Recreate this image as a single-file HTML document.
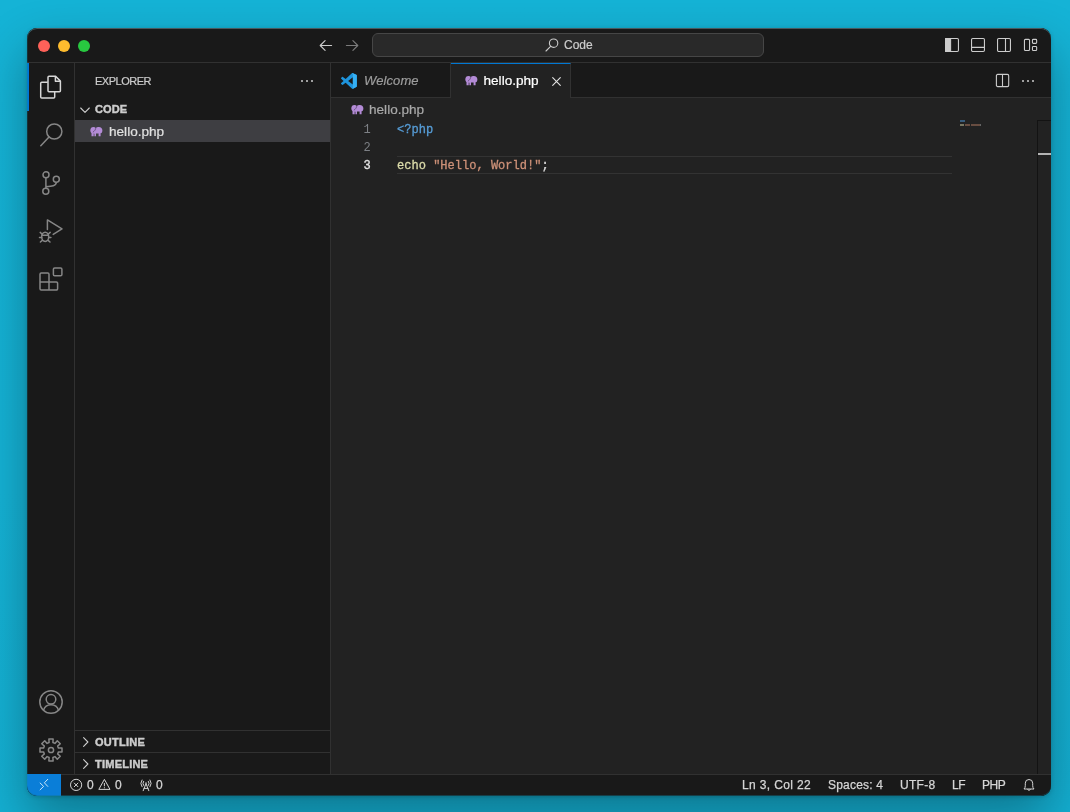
<!DOCTYPE html>
<html>
<head>
<meta charset="utf-8">
<title>Code</title>
<style>
*{box-sizing:border-box;margin:0;padding:0}
html,body{width:1070px;height:812px;overflow:hidden}
body{font-family:"Liberation Sans",sans-serif;background:#15b2d5;position:relative;color:#ccc}
.bg{position:absolute;left:0;top:0;width:1070px;height:812px;background:linear-gradient(180deg,#15b3d6 0%,#15b2d5 60%,#14afd2 100%)}
.shadow{position:absolute;left:27px;top:28px;width:1024px;height:768px;border-radius:10px;box-shadow:0 22px 50px rgba(0,0,0,.32),0 1px 4px rgba(0,0,0,.18)}
.win{will-change:transform;position:absolute;left:27px;top:28px;width:1024px;height:768px;border-radius:10px;overflow:hidden;background:#191919}
.abs{position:absolute}
.t{position:absolute;white-space:nowrap;line-height:1;-webkit-text-stroke:.2px currentColor}
svg{position:absolute;overflow:visible}
/* title bar */
.title{left:0;top:0;width:1024px;height:35px;border-bottom:1px solid #313131;background:#191919}
.tl{position:absolute;width:12px;height:12px;border-radius:50%;top:12px}
.cc{left:345px;top:5px;width:392px;height:24px;border-radius:6px;background:#292929;border:1px solid #464646}
/* activity bar */
.act{left:0;top:35px;width:48px;height:711px;border-right:1px solid #313131;background:#191919}
/* sidebar */
.side{left:48px;top:35px;width:256px;height:711px;border-right:1px solid #313131;background:#191919}
/* editor */
.tabs{left:304px;top:35px;width:720px;height:35px;background:#191919;border-bottom:1px solid #313131}
.tab{position:absolute;top:0;height:35px;width:120px;border-right:1px solid #313131}
.tab.on{background:#222222;border-top:1px solid #0078d4}
.ed{left:304px;top:70px;width:720px;height:676px;background:#222222}
.mono{font-family:"Liberation Mono",monospace;font-size:12.040px;-webkit-text-stroke:.3px currentColor}
/* status */
.status{left:0;top:746px;width:1024px;height:22px;border-top:1px solid #313131;background:#191919}
.st{position:absolute;white-space:nowrap;font-size:12px;line-height:12px;top:751px;color:#d6d6d6;-webkit-text-stroke:.25px currentColor}
</style>
</head>
<body>
<div class="bg"></div>
<div class="shadow"></div>
<div class="win">

<!-- TITLE BAR -->
<div class="abs title">
  <div class="tl" style="left:11px;background:#fe6159"></div>
  <div class="tl" style="left:31px;background:#febc2e"></div>
  <div class="tl" style="left:51px;background:#28c840"></div>
  <!-- back / forward -->
  <svg style="left:292px;top:11px" width="14" height="14" viewBox="0 0 14 14" fill="none" stroke="#ccc" stroke-width="1.1" stroke-linecap="round" stroke-linejoin="round"><path d="M12.600 6.500H1.200M6.100 1.600 1.200 6.500 6.100 11.400"/></svg>
  <svg style="left:318px;top:11px" width="14" height="14" viewBox="0 0 14 14" fill="none" stroke="#7c7c7c" stroke-width="1.1" stroke-linecap="round" stroke-linejoin="round"><path d="M1.400 6.500h11.400M7.900 1.600 12.800 6.500 7.900 11.400"/></svg>
  <div class="abs cc"></div>
  <svg style="left:518px;top:10px" width="14" height="14" viewBox="0 0 14 14" fill="none" stroke="#ccc" stroke-width="1.1" stroke-linecap="round"><circle cx="8.6" cy="5.2" r="4.2"/><path d="M5.6 8.3 1 13"/></svg>
  <div class="t" id="t_code" style="left:537px;top:11px;font-size:12px;color:#ccc">Code</div>
  <!-- layout icons -->
  <svg style="left:918px;top:10px" width="14" height="14" viewBox="0 0 14 14" fill="none" stroke="#ccc" stroke-width="1.1"><rect x=".55" y=".55" width="12.9" height="12.9" rx="1.2"/><path d="M.6.6h5v12.8h-5z" fill="#ccc"/></svg>
  <svg style="left:944px;top:10px" width="14" height="14" viewBox="0 0 14 14" fill="none" stroke="#ccc" stroke-width="1.1"><rect x=".55" y=".55" width="12.9" height="12.9" rx="1.2"/><path d="M.6 9.4h12.8"/></svg>
  <svg style="left:970px;top:10px" width="14" height="14" viewBox="0 0 14 14" fill="none" stroke="#ccc" stroke-width="1.1"><rect x=".55" y=".55" width="12.9" height="12.9" rx="1.2"/><path d="M8.500 .6v12.800"/></svg>
  <svg style="left:996px;top:10px" width="14" height="14" viewBox="0 0 14 14" fill="none" stroke="#ccc" stroke-width="1.1"><rect x="1.450" y="1.350" width="5.100" height="11.200" rx="1"/><rect x="9.450" y="1.350" width="4.200" height="4" rx=".9"/><rect x="9.450" y="8.450" width="4.200" height="4.100" rx=".9"/></svg>
</div>

<!-- ACTIVITY BAR -->
<div class="abs act">
  <div class="abs" style="left:0;top:0;width:2px;height:48px;background:#0078d4"></div>
  <!-- explorer -->
  <svg style="left:12px;top:12px" width="24" height="24" viewBox="0 0 24 24" fill="none" stroke="#d7d7d7" stroke-width="1.5" stroke-linejoin="round"><path d="M9 15.800V2.300a1 1 0 0 1 1-1h6.600l4.800 4.800v9.700a1 1 0 0 1-1 1h-10.400a1 1 0 0 1-1-1z"/><path d="M16.400 1.500v4.800h4.800"/><path d="M8.800 7.200H2.700a1 1 0 0 0-1 1v13.800a1 1 0 0 0 1 1h12a1 1 0 0 0 1-1V17"/></svg>
  <!-- search -->
  <svg style="left:12px;top:60px" width="24" height="24" viewBox="0 0 24 24" fill="none" stroke="#868686" stroke-width="1.5" stroke-linecap="round"><circle cx="15.300" cy="8.500" r="7.600"/><path d="M10 13.900 1.800 22.800"/></svg>
  <!-- scm -->
  <svg style="left:12px;top:108px" width="24" height="24" viewBox="0 0 24 24" fill="none" stroke="#868686" stroke-width="1.5"><circle cx="7" cy="3.800" r="3"/><circle cx="17.300" cy="8.200" r="3"/><circle cx="6.800" cy="20.300" r="3"/><path d="M6.900 6.800v10.500M17.300 11.200c0 3.800-4.600 4.100-10.400 4.500"/></svg>
  <!-- debug -->
  <svg style="left:12px;top:156px" width="24" height="24" viewBox="0 0 24 24" fill="none" stroke="#868686" stroke-width="1.5" stroke-linejoin="round" stroke-linecap="round"><path d="M8.400 10.600V0.900L23 9.900l-8.800 5.500"/><ellipse cx="6.200" cy="17.800" rx="3.500" ry="4.600"/><path d="M3 16.200h6.400M3 15 1.200 13.400M9.400 15l1.800-1.600M2.700 18.600H.5M9.700 18.600h2.200M3.300 21.400l-1.900 1.600M9.100 21.400l1.900 1.600"/></svg>
  <!-- extensions -->
  <svg style="left:12px;top:204px" width="24" height="24" viewBox="0 0 24 24" fill="none" stroke="#868686" stroke-width="1.5" stroke-linejoin="round"><path d="M2.200 6H8.800a1.200 1.200 0 0 1 1.200 1.200V15H17.400a1.200 1.200 0 0 1 1.200 1.200V21.800a1.200 1.200 0 0 1-1.200 1.200H2.200a1.200 1.200 0 0 1-1.200-1.200V7.200a1.200 1.200 0 0 1 1.200-1.200z"/><path d="M1 15H10V23"/><rect x="14.400" y="1" width="8.500" height="7.800" rx="1.300"/></svg>
  <!-- account -->
  <svg style="left:12px;top:627px" width="24" height="24" viewBox="0 0 24 24" fill="none" stroke="#868686" stroke-width="1.5"><circle cx="12" cy="12" r="11.200"/><circle cx="12" cy="9.300" r="4.800"/><path d="M4.500 20.300c1.100-3.900 4-5.600 7.500-5.600s6.400 1.700 7.500 5.600"/></svg>
  <!-- gear -->
  <svg style="left:12px;top:675px" width="24" height="24" viewBox="0 0 24 24" fill="none" stroke="#868686" stroke-width="1.5" stroke-linejoin="round"><circle cx="12" cy="12" r="2.6"/><path d="M10.09 4.54L9.88 1.00L14.12 1.00L13.91 4.54L15.93 5.38L18.28 2.73L21.27 5.72L18.62 8.07L19.46 10.09L23.00 9.88L23.00 14.12L19.46 13.91L18.62 15.93L21.27 18.28L18.28 21.27L15.93 18.62L13.91 19.46L14.12 23.00L9.88 23.00L10.09 19.46L8.07 18.62L5.72 21.27L2.73 18.28L5.38 15.93L4.54 13.91L1.00 14.12L1.00 9.88L4.54 10.09L5.38 8.07L2.73 5.72L5.72 2.73L8.07 5.38Z"/></svg>
</div>

<!-- SIDEBAR -->
<div class="abs side">
  <div class="t" id="t_explorer" style="letter-spacing:-0.49px;left:20px;top:13px;font-size:11px;color:#ccc">EXPLORER</div>
  <svg style="left:225px;top:16px" width="14" height="4" viewBox="0 0 14 4" fill="#ccc"><circle cx="2" cy="2" r="1"/><circle cx="7" cy="2" r="1"/><circle cx="12" cy="2" r="1"/></svg>
  <svg style="left:4.200px;top:40.500px" width="12" height="12" viewBox="0 0 12 12" fill="none" stroke="#ccc" stroke-width="1.1" stroke-linecap="round" stroke-linejoin="round"><path d="M1.700 4 6 8.300l4.300-4.300"/></svg>
  <div class="t" id="t_codeh" style="-webkit-text-stroke:.45px currentColor;letter-spacing:0.1px;left:20px;top:41px;font-size:11px;font-weight:bold;color:#ccc">CODE</div>
  <div class="abs" style="left:0;top:57px;width:255px;height:22px;background:#3e3e42"></div>
  <svg class="ele" style="left:15px;top:64px" width="12.4" height="9.2" viewBox="0 0 12.4 9.2"><use href="#ele"/></svg>
  <div class="t" id="t_hello1" style="left:34px;top:62px;font-size:13.6px;color:#e0e0e0">hello.php</div>

  <div class="abs" style="left:0;top:667px;width:255px;height:1px;background:#313131"></div>
  <svg style="left:5px;top:673px" width="12" height="12" viewBox="0 0 12 12" fill="none" stroke="#ccc" stroke-width="1.1" stroke-linecap="round" stroke-linejoin="round"><path d="M3.600 1.700 7.900 6l-4.300 4.300"/></svg>
  <div class="t" id="t_outline" style="-webkit-text-stroke:.45px currentColor;letter-spacing:0.25px;left:20px;top:674px;font-size:11px;font-weight:bold;color:#ccc">OUTLINE</div>
  <div class="abs" style="left:0;top:689px;width:255px;height:1px;background:#313131"></div>
  <svg style="left:5px;top:695px" width="12" height="12" viewBox="0 0 12 12" fill="none" stroke="#ccc" stroke-width="1.1" stroke-linecap="round" stroke-linejoin="round"><path d="M3.600 1.700 7.900 6l-4.300 4.300"/></svg>
  <div class="t" id="t_timeline" style="-webkit-text-stroke:.45px currentColor;letter-spacing:0.23px;left:20px;top:696px;font-size:11px;font-weight:bold;color:#ccc">TIMELINE</div>
</div>

<!-- TABS -->
<div class="abs tabs">
  <div class="tab" style="left:0">
    <svg style="left:10px;top:10px" width="15.800" height="15.800" viewBox="0 0 100 100"><use href="#vsc"/></svg>
    <div class="t" id="t_welcome" style="letter-spacing:0.1px;left:33px;top:11px;font-size:13px;font-style:italic;color:#9d9d9d">Welcome</div>
  </div>
  <div class="tab on" style="left:120px">
    <svg class="ele" style="left:14px;top:12px" width="12.4" height="9.2" viewBox="0 0 12.4 9.2"><use href="#ele"/></svg>
    <div class="t" id="t_hello2" style="left:32.500px;top:10px;font-size:13.6px;color:#fff">hello.php</div>
    <svg style="left:101px;top:12.500px" width="9" height="9" viewBox="0 0 9 9" fill="none" stroke="#e4e4e4" stroke-width="1.1" stroke-linecap="round"><path d="M.7.700l7.600 7.600M8.300.700.700 8.300"/></svg>
  </div>
  <!-- editor actions -->
  <svg style="left:665px;top:11px" width="14" height="14" viewBox="0 0 14 14" fill="none" stroke="#ccc" stroke-width="1.1"><rect x=".4" y=".4" width="12.300" height="12.200" rx="1.300"/><path d="M6.500 .4v12.200"/></svg>
  <svg style="left:690px;top:16px" width="14" height="4" viewBox="0 0 14 4" fill="#ccc"><circle cx="2" cy="2" r="1"/><circle cx="7" cy="2" r="1"/><circle cx="12" cy="2" r="1"/></svg>
</div>

<!-- EDITOR -->
<div class="abs ed">
  <!-- breadcrumb -->
  <svg class="ele" style="left:20px;top:7px" width="12.4" height="9.2" viewBox="0 0 12.4 9.2"><use href="#ele"/></svg>
  <div class="t" id="t_hello3" style="left:38px;top:5px;font-size:13.6px;color:#a9a9a9">hello.php</div>
  <!-- current line -->
  <div class="abs" style="left:66px;top:58px;width:555px;height:18px;border-top:1px solid #333;border-bottom:1px solid #333"></div>
  <!-- line numbers -->
  <div class="t mono" style="-webkit-text-stroke:0;left:32.500px;top:26px;color:#7d8085">1</div>
  <div class="t mono" style="-webkit-text-stroke:0;left:32.500px;top:44px;color:#7d8085">2</div>
  <div class="t mono" style="left:32.500px;top:62px;color:#e4e4e4">3</div>
  <!-- code -->
  <div class="t mono" style="left:66px;top:26px;color:#569cd6">&lt;?php</div>
  <div class="t mono" style="left:66px;top:62px;color:#d8d8d8"><span style="color:#dcdcaa">echo</span> <span style="color:#ce9178">"Hello, World!"</span>;</div>
  <!-- minimap -->
  <div class="abs" style="left:629px;top:22.400px;width:5px;height:1.500px;background:#3f6c93;opacity:.8"></div>
  <div class="abs" style="left:629px;top:26.300px;width:4px;height:1.500px;background:#8d8d74;opacity:.8"></div>
  <div class="abs" style="left:634px;top:26.300px;width:5px;height:1.500px;background:#86604f;opacity:.7"></div><div class="abs" style="left:640px;top:26.300px;width:9px;height:1.500px;background:#86604f;opacity:.7"></div>
  <div class="abs" style="left:649px;top:26.300px;width:1px;height:1.500px;background:#777;opacity:.8"></div>
  <!-- overview ruler -->
  <div class="abs" style="left:706px;top:22px;width:14px;height:654px;border-left:1px solid #131313;border-top:1px solid #131313"></div>
  <div class="abs" style="left:707px;top:55px;width:13px;height:2px;background:#b4b4b4"></div>
</div>

<!-- STATUS BAR -->
<div class="abs status"></div>
<div class="abs" style="left:0;top:746px;width:34px;height:22px;background:#0a7ed8"></div>
<svg style="left:0;top:746px" width="34" height="22" viewBox="0 0 34 22" fill="none" stroke="#d6ecfc" stroke-width=".95" stroke-linecap="round" stroke-linejoin="round"><path d="M13.100 9 16.600 12.400 13.100 15.800M20.750 5.300 17.400 8.800 20.750 12.400"/></svg>
<svg style="left:43px;top:750px" width="13" height="13" viewBox="0 0 13 13" fill="none" stroke="#d4d4d4" stroke-width="1"><circle cx="6.100" cy="6.900" r="5.600"/><path d="M4 4.800l4.200 4.200M8.200 4.800 4 9"/></svg>
<div class="st" id="s_e0" style="left:60px">0</div>
<svg style="left:71px;top:750px" width="13" height="13" viewBox="0 0 13 13" fill="none" stroke="#d4d4d4" stroke-width="1" stroke-linejoin="round"><path d="M6.400 1.400 12 11.400H.8z"/><path d="M6.400 5v3.300M6.400 9.300v1"/></svg>
<div class="st" id="s_w0" style="left:88px">0</div>
<svg style="left:112.500px;top:751px" width="12" height="12" viewBox="0 0 12 12" fill="none" stroke="#d4d4d4" stroke-width="1" stroke-linecap="round" stroke-linejoin="round"><path d="M3.200 11.700 6 4.600l2.800 7.100M4 9.400h4M6 3.600v1M3.600 2.300a3.600 3.600 0 0 0 0 4.200M2 1a5.800 5.800 0 0 0 0 6.800M8.400 2.300a3.600 3.600 0 0 1 0 4.200M10 1a5.800 5.800 0 0 1 0 6.800"/></svg>
<div class="st" id="s_r0" style="left:129px">0</div>
<div class="st" id="s_ln" style="letter-spacing:0.36px;left:715px">Ln 3, Col 22</div>
<div class="st" id="s_sp" style="letter-spacing:0.21px;left:801px">Spaces: 4</div>
<div class="st" id="s_utf" style="letter-spacing:0.28px;left:873px">UTF-8</div>
<div class="st" id="s_lf" style="letter-spacing:-0.36px;left:925px">LF</div>
<div class="st" id="s_php" style="letter-spacing:-0.43px;left:955px">PHP</div>
<svg style="left:996px;top:750px" width="12" height="14" viewBox="0 0 12 14" fill="none" stroke="#d4d4d4" stroke-width="1" stroke-linejoin="round"><path d="M1 11c.9-.9 1.300-1.900 1.300-3.300V5.200a3.700 3.700 0 0 1 7.400 0V7.700c0 1.400.4 2.400 1.300 3.300z"/><path d="M4.500 11.200a1.600 1.600 0 0 0 3 0"/></svg>

<div class="abs" style="left:0;top:0;width:1024px;height:768px;border-radius:10px;box-shadow:inset 0 1px 0 rgba(150,195,210,.38),inset 0 -1px 0 rgba(14,120,145,.4),inset 1px 0 0 rgba(15,140,170,.22);pointer-events:none"></div>
</div>

<!-- defs -->
<svg width="0" height="0" style="position:absolute">
  <defs>
    <g id="ele"><path fill="#b38bd6" d="M0.300 3.400C0.300 1.200 1.600 0 3.400 0 4.500 0 5.300 0.400 5.800 1 6.500 0.300 7.600 0 8.900 0 11 0 12.400 1.400 12.400 3.600 12.400 4.600 12.200 5.300 11.600 6L10.600 6.200V9.200H8.600V6.600H6V9.200H4.400V6.800L3.700 6.600V9.200H1.500V6.200C0.700 5.500 0.300 4.600 0.300 3.400Z"/><path fill="none" stroke="#3a2a4d" stroke-width=".55" d="M5.900 0.500C5.700 2.600 4.500 4.200 2.900 5.200"/></g>
    <g id="vsc"><path fill-rule="evenodd" fill="#1e94dc" d="M70.912 99.317C72.487 99.931 74.283 99.891 75.873 99.126L96.461 89.220C98.624 88.179 100 85.989 100 83.587V16.413C100 14.011 98.624 11.822 96.461 10.781L75.873 0.874C73.786 -0.130 71.345 0.116 69.514 1.447C69.252 1.637 69.003 1.849 68.769 2.083L29.355 38.042L12.187 25.010C10.589 23.797 8.354 23.896 6.869 25.246L1.363 30.255C-0.453 31.906 -0.455 34.763 1.359 36.417L16.247 50L1.359 63.583C-0.455 65.237 -0.453 68.094 1.363 69.745L6.869 74.754C8.354 76.104 10.589 76.204 12.187 74.991L29.355 61.959L68.769 97.917C69.393 98.541 70.125 99.010 70.912 99.317ZM75.015 27.299L45.109 50L75.015 72.701V27.299Z"/><path fill="#35b0f4" d="M75.858 99.126C73.472 100.274 70.622 99.789 68.750 97.917C71.056 100.223 75 98.590 75 95.328V4.672C75 1.410 71.056 -0.223 68.750 2.083C70.622 0.211 73.472 -0.274 75.858 0.874L96.443 10.773C98.606 11.813 99.981 14 99.981 16.400V83.600C99.981 86 98.606 88.187 96.443 89.227L75.858 99.126Z"/></g>
  </defs>
</svg>

</body>
</html>
